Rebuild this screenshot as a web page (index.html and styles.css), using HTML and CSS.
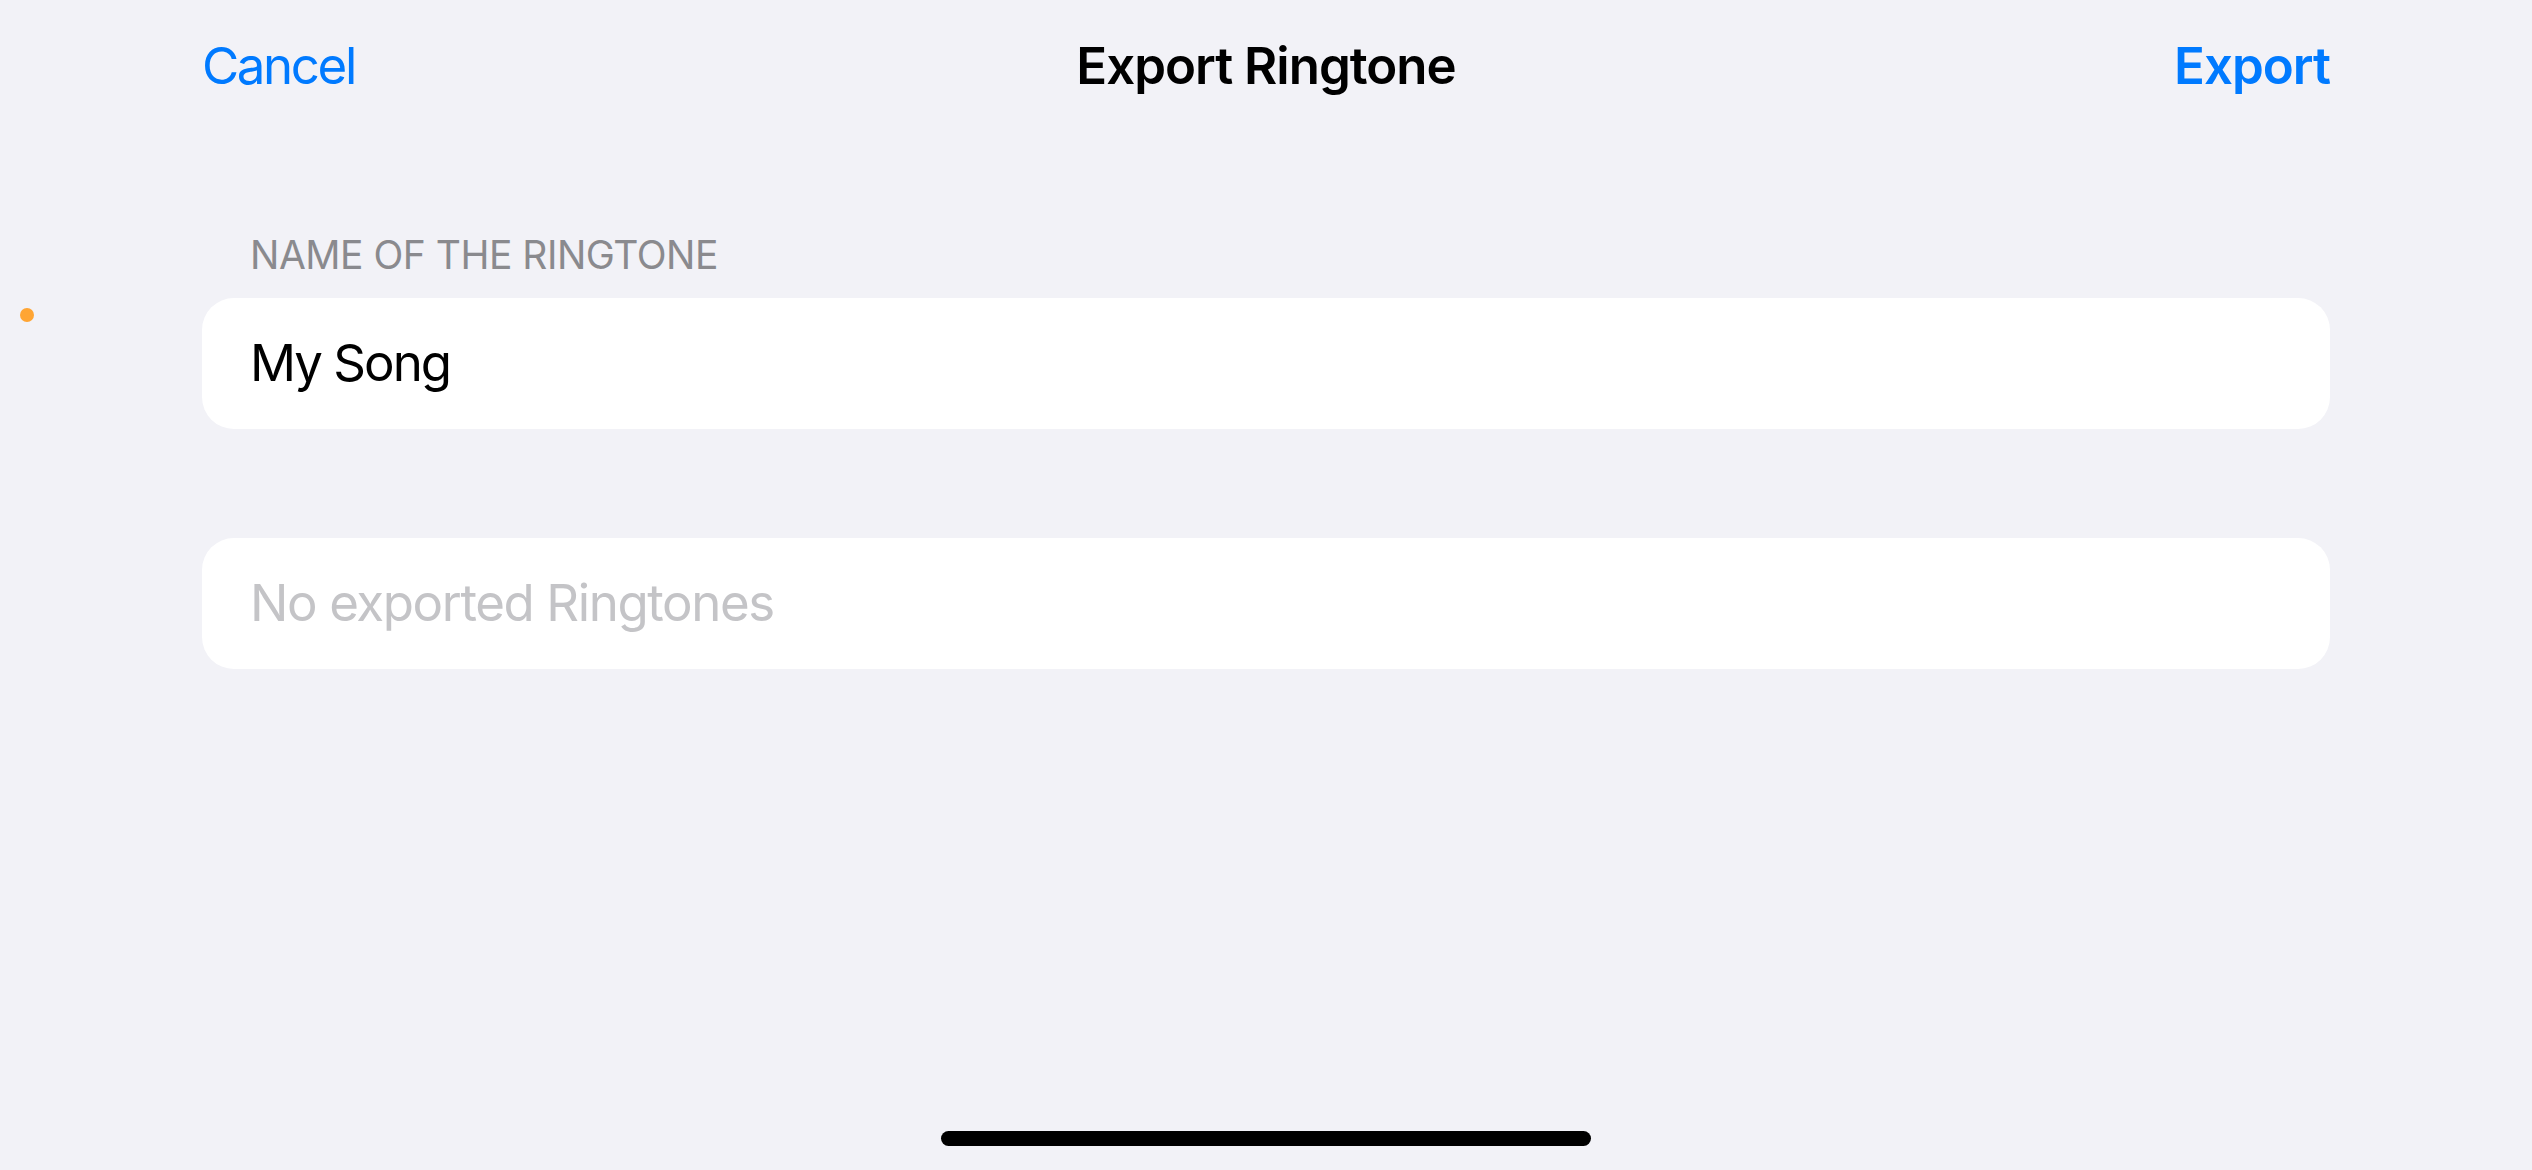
FILE: index.html
```html
<!DOCTYPE html>
<html lang="en">
<head>
    <meta charset="UTF-8">
    <meta name="viewport" content="width=device-width, initial-scale=1.0">
    <title>Export Ringtone</title>
    <link rel="stylesheet" href="styles.css">
</head>
<body>
    <div id="screen">
        <div class="navBar">
            <span class="navButton cancel">Cancel</span>
            <span class="navTitle">Export Ringtone</span>
            <span class="navButton done">Export</span>
        </div>

        <div class="section">
            <div class="sectionHeader">NAME OF THE RINGTONE</div>
            <div class="card">
                <span class="cellText name">My Song</span>
            </div>
        </div>

        <div class="section second">
            <div class="card">
                <span class="cellText placeholder">No exported Ringtones</span>
            </div>
        </div>

        <div class="privacyDot"></div>
        <div class="homeIndicator"></div>
    </div>
</body>
</html>
```

FILE: styles.css
```css
body {
    margin: 0;
    background-color: #f2f2f7;
    font-family: 'Inter', 'Roboto', sans-serif;
    color: #000000;
}

#screen {
    position: relative;
    width: 2532px;
    height: 1170px;
    overflow: hidden;
    padding: 0 202px;
    box-sizing: border-box;
}

.navBar {
    display: grid;
    grid-template-columns: 1fr auto 1fr;
    align-items: center;
    padding-top: 35px;
    font-size: 51px;
    line-height: 62px;
    letter-spacing: -1px;
}

.navButton {
    color: #007aff;
}

.cancel {
    justify-self: start;
    letter-spacing: -2.4px;
}

.done {
    justify-self: end;
    font-weight: 600;
}

.navTitle {
    font-weight: 600;
}

.section {
    margin-top: 134px;
}

.section.second {
    margin-top: 109px;
}

.sectionHeader {
    padding-left: 48px;
    font-size: 39px;
    line-height: 48px;
    letter-spacing: -0.5px;
    color: #8a8a8e;
    margin-bottom: 19px;
}

.card {
    display: flex;
    align-items: center;
    height: 131px;
    padding-left: 48px;
    background-color: #ffffff;
    border-radius: 32px;
}

.cellText {
    font-size: 51px;
    line-height: 62px;
    letter-spacing: -1.4px;
    padding-bottom: 2px;
}

.cellText.name {
    letter-spacing: -2px;
}

.placeholder {
    color: #c4c4c7;
}

.privacyDot {
    position: absolute;
    left: 20px;
    top: 308px;
    width: 14px;
    height: 14px;
    border-radius: 50%;
    background-color: #ffa533;
}

.homeIndicator {
    position: absolute;
    left: 941px;
    bottom: 24px;
    width: 650px;
    height: 15px;
    border-radius: 8px;
    background-color: #000000;
}
```
